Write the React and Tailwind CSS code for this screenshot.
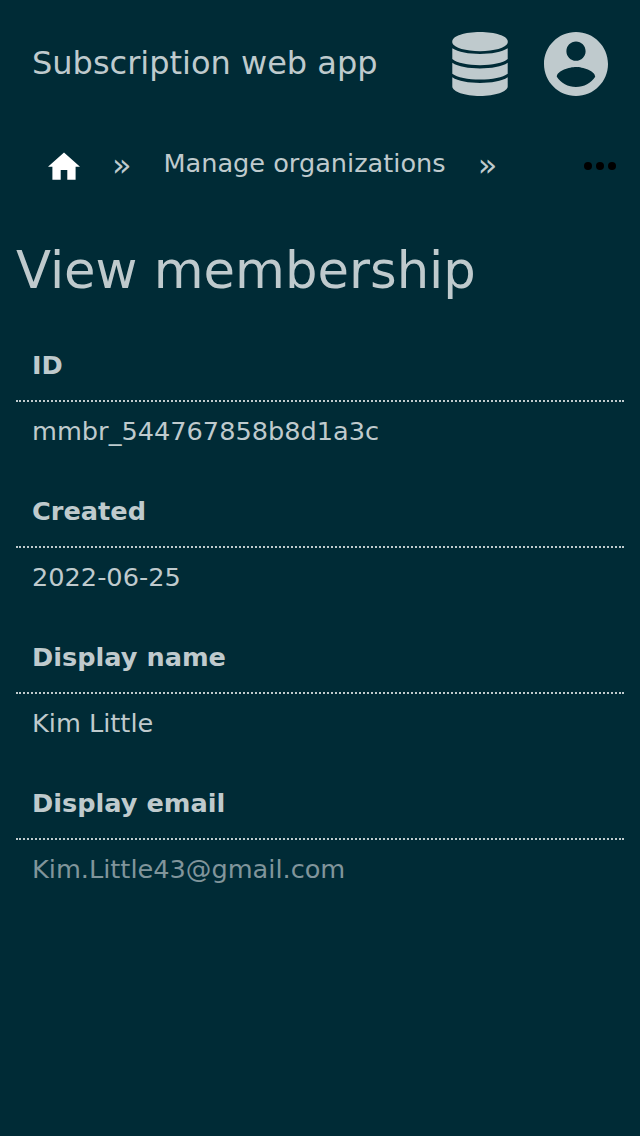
const fields = [
  { label: "ID", value: "mmbr_544767858b8d1a3c" },
  { label: "Created", value: "2022-06-25" },
  { label: "Display name", value: "Kim Little" },
  { label: "Display email", value: "Kim.Little43@gmail.com", muted: true },
];

function DatabaseIcon() {
  return (
    <svg viewBox="0 0 56 64" className="h-16 w-14" fill="currentColor">
      <path d="M28 0C43 0 55.7 4 55.7 9.3V11C54 15.8 42 19.2 28 19.2S2 15.8 .3 11V9.3C.3 4 13 0 28 0Z" />
      <path d="M.3 16.2C6 20 17 21.9 28 21.9S50 20 55.7 16.2V27C51 31 40 33.2 28 33.2S5 31 .3 27Z" />
      <path d="M.3 30.8C6 34.8 17 36.5 28 36.5S50 34.8 55.7 30.8V41.8C51 45.6 40 47.6 28 47.6S5 45.6 .3 41.8Z" />
      <path d="M.3 45.2C6 49.2 17 50.9 28 50.9S50 49.2 55.7 45.2V54.5C55.7 59.5 43 64 28 64S.3 59.5 .3 54.5Z" />
    </svg>
  );
}

function AccountIcon() {
  return (
    <svg viewBox="2 2 20 20" className="size-16" fill="currentColor">
      <path d="M12 2C6.48 2 2 6.48 2 12s4.48 10 10 10 10-4.48 10-10S17.52 2 12 2zm0 3c1.66 0 3 1.34 3 3s-1.34 3-3 3-3-1.34-3-3 1.34-3 3-3zm0 14.2c-2.5 0-4.71-1.28-6-3.22.03-1.99 4-3.08 6-3.08 1.99 0 5.97 1.09 6 3.08-1.29 1.94-3.5 3.22-6 3.22z" />
    </svg>
  );
}

function HomeIcon() {
  return (
    <svg viewBox="0 0 32 28" className="h-7 w-8 text-white" fill="currentColor">
      <path d="M12.7 27.8V18H19.3V27.8H27.6V14.8H32L16 .4 0 14.8H4.4V27.8Z" />
    </svg>
  );
}

function Header() {
  return (
    <header className="flex h-32 items-center justify-between px-8">
      <div className="-mt-0.5 text-[32px] leading-10">Subscription web app</div>
      <div className="flex items-center gap-9">
        <DatabaseIcon />
        <AccountIcon />
      </div>
    </header>
  );
}

function Breadcrumb() {
  return (
    <nav className="flex h-[72px] items-center pl-12 pr-6 pt-1 text-[25.6px]">
      <HomeIcon />
      <span className="-mt-0.5 ml-8 w-[51.4px] text-[32px]">»</span>
      <span className="-mt-1.5">Manage organizations</span>
      <span className="-mt-0.5 ml-8 text-[32px]">»</span>
      <svg viewBox="0 0 32 8" className="ml-auto h-2 w-8 text-black" fill="currentColor">
        <circle cx="4" cy="4" r="4" />
        <circle cx="16" cy="4" r="4" />
        <circle cx="28" cy="4" r="4" />
      </svg>
    </nav>
  );
}

export default function App() {
  return (
    <div className="min-h-[1136px] bg-[#002b36] font-['DejaVu_Sans',sans-serif] text-[#bfcacd]">
      <Header />
      <Breadcrumb />
      <main className="px-4">
        <h1 className="pt-9 text-[51.2px] leading-[68px]">View membership</h1>
        <dl className="pt-[25px] text-[25.6px] leading-8">
          {fields.map((f) => (
            <div key={f.label} className="h-[146px]">
              <dt className="h-[73px] border-b-2 border-dotted border-[#bfcacd] px-4 pt-5 font-bold">{f.label}</dt>
              <dd className={f.muted ? "px-4 pt-[13px] text-[#80959b]" : "px-4 pt-[13px]"}>{f.value}</dd>
            </div>
          ))}
        </dl>
      </main>
    </div>
  );
}
